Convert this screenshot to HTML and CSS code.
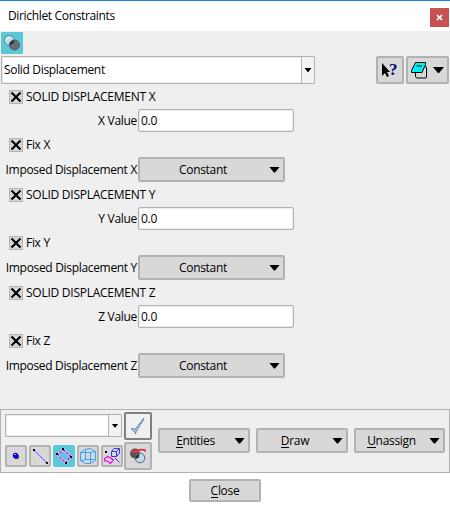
FILE: index.html
```html
<!DOCTYPE html>
<html lang="en">
<head>
<meta charset="utf-8">
<title>Dirichlet Constraints</title>
<link rel="stylesheet" href="styles.css">
</head>
<body>
<div class="window">
  <header class="titlebar"><span class="title">Dirichlet Constraints</span><button class="x-close" aria-label="x"><svg width="7" height="7" viewBox="0 0 7 7"><path d="M1 1.200L6 6M6 1.200L1 6" stroke="#fff" stroke-width="1.700"/></svg></button></header>
  <main class="content">
    <div class="tabs"><div class="tab"><svg width="22" height="22" viewBox="0 0 22 22"><circle cx="8.500" cy="8.500" r="5" fill="#b5dfeb" stroke="#697f88"/><circle cx="13.500" cy="13" r="5" fill="#696c70" stroke="#555b60"/><path d="M8.600 12.800A5 5 0 0 1 13.300 8.200A5 5 0 0 1 8.600 12.800Z" fill="#073d43"/><path d="M5 8q1-3 4-2" stroke="#e5f8fc" stroke-width="1.500" fill="none"/></svg></div></div>
    <div class="chooser">
      <div class="combo"><span class="combo-text">Solid Displacement</span><span class="combo-arrow"><i class="tri small"></i></span></div>
      <button class="btn help"><svg width="24" height="24" viewBox="0 0 24 24"><path d="M4 5v13l3-3l2 4l2-1l-2-4h3z" fill="#000"/></svg><b class="qmark">?</b></button>
      <button class="btn book"><svg width="18" height="18" viewBox="0 0 18 18"><path d="M5.500 12v3.500l1 1.500h9.500l.5-.5V7l-1-2" fill="#d4d4d4" stroke="#000"/><path d="M5.500 1.500H15.500V3.500L12 11.500H1.500V9.500Z" fill="#00f0f0" stroke="#000"/><path d="M6.500 5h5.500" stroke="#008080" stroke-width="2"/><path d="M14 10h1M15 13h1M13 15h1" stroke="#fff"/></svg><i class="tri"></i></button>
    </div>
    <section class="group">
      <div class="check"><span class="box"><svg width="12" height="12" viewBox="0 0 12 12"><path d="M1.500 1.500L10.500 10.500M10.500 1.500L1.500 10.500" stroke="#000" stroke-width="2.200"/></svg></span><span class="caps">SOLID DISPLACEMENT X</span></div>
      <div class="field"><label>X Value</label><div class="input">0.0</div></div>
      <div class="check"><span class="box"><svg width="12" height="12" viewBox="0 0 12 12"><path d="M1.500 1.500L10.500 10.500M10.500 1.500L1.500 10.500" stroke="#000" stroke-width="2.200"/></svg></span><span>Fix X</span></div>
      <div class="field"><label class="low">Imposed Displacement X</label><button class="btn menu wide"><span>Constant</span><i class="tri"></i></button></div>
    </section>
    <section class="group">
      <div class="check"><span class="box"><svg width="12" height="12" viewBox="0 0 12 12"><path d="M1.500 1.500L10.500 10.500M10.500 1.500L1.500 10.500" stroke="#000" stroke-width="2.200"/></svg></span><span class="caps">SOLID DISPLACEMENT Y</span></div>
      <div class="field"><label>Y Value</label><div class="input">0.0</div></div>
      <div class="check"><span class="box"><svg width="12" height="12" viewBox="0 0 12 12"><path d="M1.500 1.500L10.500 10.500M10.500 1.500L1.500 10.500" stroke="#000" stroke-width="2.200"/></svg></span><span>Fix Y</span></div>
      <div class="field"><label class="low">Imposed Displacement Y</label><button class="btn menu wide"><span>Constant</span><i class="tri"></i></button></div>
    </section>
    <section class="group">
      <div class="check"><span class="box"><svg width="12" height="12" viewBox="0 0 12 12"><path d="M1.500 1.500L10.500 10.500M10.500 1.500L1.500 10.500" stroke="#000" stroke-width="2.200"/></svg></span><span class="caps">SOLID DISPLACEMENT Z</span></div>
      <div class="field"><label>Z Value</label><div class="input">0.0</div></div>
      <div class="check"><span class="box"><svg width="12" height="12" viewBox="0 0 12 12"><path d="M1.500 1.500L10.500 10.500M10.500 1.500L1.500 10.500" stroke="#000" stroke-width="2.200"/></svg></span><span>Fix Z</span></div>
      <div class="field"><label class="low">Imposed Displacement Z</label><button class="btn menu wide"><span>Constant</span><i class="tri"></i></button></div>
    </section>
  </main>
  <section class="panel">
    <div class="picker">
      <div class="combo mini"><span class="combo-text"></span><span class="combo-arrow"><i class="tri small"></i></span></div>
      <div class="tools">
        <button class="btn tool"><svg width="22" height="22" viewBox="0 0 22 22"><circle cx="11.500" cy="11.500" r="2.600" fill="#444"/><circle cx="10.500" cy="10.500" r="2.700" fill="#0000e0"/><path d="M9 9h2v1H9z" fill="#bcbcff"/></svg></button>
        <button class="btn tool"><svg width="22" height="22" viewBox="0 0 22 22"><path d="M5 5L18 18" stroke="#8888ff" stroke-width="1.300"/><path d="M4 4h2v2H4zM17 17h2v2h-2z"/></svg></button>
        <button class="btn tool on"><svg width="22" height="22" viewBox="0 0 22 22"><path d="M10 4.500L17.500 11L13 17.500Q10 16 4.500 9Q8 8 10 4.500Z" fill="none" stroke="#ddd5ff" stroke-width="2.400"/><path d="M10 4.500L17.500 11L13 17.500Q10 16 4.500 9Q8 8 10 4.500Z" fill="none" stroke="#a000e0" stroke-width="1.200" stroke-dasharray="3 1"/><path d="M9 3h2v2H9zM3 8h2v2H3zM17 11h2v2h-2zM12 17h2v2h-2z"/></svg></button>
        <button class="btn tool"><svg width="22" height="22" viewBox="0 0 22 22"><g fill="none" stroke="#32a4ff"><path d="M3.500 7.500L7.500 4.500L13 3.500L18.500 6.500V15.500L13.500 18.500H8.500L3.500 15.500ZM3.500 7.500H13.500L18.500 6.500M13.500 7.500V18M8.500 4.500V14.500H18M8.500 14.500L4 16"/></g></svg></button>
        <button class="btn tool"><svg width="22" height="22" viewBox="0 0 22 22"><path d="M4 6h2v2H4z"/><g fill="none" stroke="#3434e8"><path d="M10.500 6.500L13 3.500H18.500V8L15.500 11.500H10.500ZM10.500 6.500H15.500V11.500M15.500 6.500L18.500 3.500M14 13L18.500 17.500"/></g><path d="M3.500 13.500L7 11.500L12.500 15L9.500 18.500L6.500 16H3.500Z" fill="none" stroke="#f000e0" stroke-width="1.200"/></svg></button>
      </div>
    </div>
    <div class="apply">
      <button class="btn big ok"><svg width="24" height="24" viewBox="0 0 24 24"><path d="M5.500 14.500L9.500 19L18 4.500L9.500 15Z" fill="#c8d8ea" stroke="#4d7db4" stroke-width="1.500" stroke-dasharray="1 .7"/></svg></button>
      <button class="btn big"><svg width="24" height="24" viewBox="0 0 24 24"><circle cx="9" cy="9.500" r="5" fill="#5a5054"/><path d="M4 8.500Q8 3.500 13.500 7.500L9 9Z" fill="#d84448"/><circle cx="14" cy="14" r="4.800" fill="#c1dce6" stroke="#606870"/><path d="M9.200 14Q10 10 13.500 9.800L13 13.500L10 15Z" fill="#163f48"/><path d="M7 8Q13 4.500 19 6V7.500" stroke="#e02b32" stroke-width="1.800" fill="none"/></svg></button>
    </div>
    <div class="actions">
      <button class="btn menu action first"><span><u>E</u>ntities</span><i class="tri"></i></button>
      <button class="btn menu action"><span><u>D</u>raw</span><i class="tri"></i></button>
      <button class="btn menu action last"><span><u>U</u>nassign</span><i class="tri"></i></button>
    </div>
  </section>
  <footer class="footer"><button class="btn close"><span><u>C</u>lose</span></button></footer>
</div>
</body>
</html>
```
FILE: styles.css
```css
* { box-sizing: border-box; }
body { margin: 0; background: #fff; }
body, button { font: 12px/16px "Open Sans", "Noto Sans", sans-serif; color: #000; letter-spacing: -.3px; }
svg { display: block; flex: none; }
.window { width: 450px; height: 508px; display: flex; flex-direction: column; }
.titlebar { height: 31px; border-top: 1px solid #1e80d4; display: flex; align-items: center; justify-content: space-between; padding: 0 1px 0 8px; }
.title { letter-spacing: -.34px; }
.x-close { width: 19px; height: 19px; margin-top: 3px; padding: 0; border: 0; background: #c75050; display: grid; place-items: center; }
.content { height: 378px; background: #efefef; padding-top: 1px; }
.tabs { height: 24px; padding-left: 1px; }
.tab { width: 22px; height: 22px; background: #5bc8da; border-radius: 1px; }
.chooser { height: 28px; display: flex; padding: 0 1px; }
.combo { width: 314px; height: 28px; border: 1px solid #b2b2b2; border-radius: 1px; background: #fff; display: flex; box-shadow: inset 0 0 0 1px #ececec; }
.combo-text { flex: 1; padding: 5px 0 0 2px; letter-spacing: -.33px; }
.combo-arrow { width: 13px; border-left: 1px solid #b2b2b2; background: #f3f3f3; display: grid; place-items: center; }
.tri { width: 11px; height: 6px; background: #000; clip-path: polygon(0 0, 100% 0, 55% 100%, 45% 100%); }
.small { width: 7px; height: 4px; }
.btn { border: 2px solid #b2b2b2; border-radius: 2px; background: #d8d8d8; padding: 0; display: flex; align-items: center; }
.help { width: 28px; height: 28px; margin-left: 61px; }
.qmark { font: bold 17px/24px "Liberation Serif", serif; color: #000080; margin-left: -13px; }
.book { width: 43px; height: 28px; margin-left: 2px; padding-left: 2px; gap: 5px; }
.group { height: 98px; display: grid; grid-template-rows: 24px 24px 24px 26px; }
.group:first-of-type { margin-top: 1px; }
.check { display: flex; align-items: center; padding-left: 9px; gap: 3px; }
.caps { letter-spacing: -.25px; }
.box { width: 14px; height: 14px; border: 1px solid #b2b2b2; background: #d8d8d8; }
.field { display: flex; }
.field label { width: 137px; text-align: right; padding-top: 4px; margin-right: 1px; }
.field .low { padding-top: 5px; letter-spacing: -.32px; }
.input { width: 156px; height: 23px; background: #fff; border: 1px solid #b2b2b2; border-radius: 2px; padding: 3px 2px; box-shadow: inset 0 0 0 1px #ececec; }
.menu { justify-content: space-between; height: 25px; }
.menu span { flex: 1; text-align: center; }
.wide { width: 147px; padding: 0 3px 0 0; }
.wide span { padding-right: 3px; }
.panel { height: 64px; border: 1px solid #b2b2b2; background: #efefef; display: flex; }
.picker { padding: 4px 0 0 4px; width: 123px; }
.mini { width: 117px; height: 23px; }
.tools { display: flex; gap: 2px; margin-top: 8px; }
.tool { width: 22px; height: 22px; justify-content: center; }
.tool svg { margin: -2px; }
.tool.on { border-color: #5bc8da; background: #5bc8da; }
.apply { padding-top: 2px; display: flex; flex-direction: column; gap: 2px; }
.big { width: 28px; height: 28px; }
.ok { border-color: #808080; background: #f0f0f0; }
.actions { display: flex; gap: 6px; padding: 18px 0 0 6px; }
.action { width: 92px; padding-right: 3px; }
.first span { padding-right: 3px; }
.last { width: 91px; }
.last span { padding-right: 2px; }
.close { width: 72px; height: 23px; justify-content: center; }
.footer { height: 35px; display: flex; padding: 6px 0 0 189px; }
u { text-decoration: none; display: inline-block; height: 15px; border-bottom: 1px solid #000; }
```
